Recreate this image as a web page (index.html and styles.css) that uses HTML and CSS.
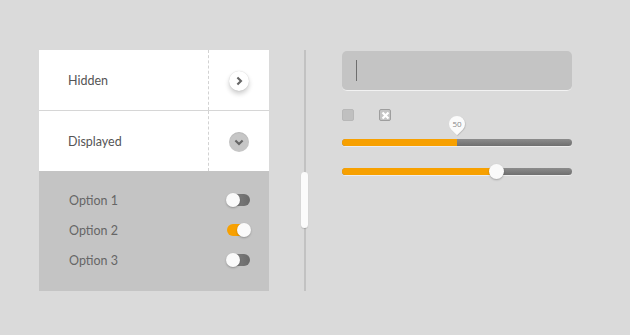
FILE: index.html
```html
<!DOCTYPE html>
<html lang="en">
<head>
    <meta charset="UTF-8">
    <title>UI Kit</title>
    <link rel="stylesheet" href="styles.css">
</head>
<body>
    <div class="kit">
        <div class="accordion">
            <div class="acc-row">
                <span class="acc-label">Hidden</span>
                <div class="acc-side">
                    <span class="round-btn">
                        <svg width="10" height="10" viewBox="0 0 10 10"><path d="M3.4 1.4 L7 5 L3.4 8.6" fill="none" stroke="#666" stroke-width="2.1"/></svg>
                    </span>
                </div>
            </div>
            <div class="acc-row">
                <span class="acc-label">Displayed</span>
                <div class="acc-side">
                    <span class="round-btn open">
                        <svg width="10" height="10" viewBox="0 0 10 10"><path d="M1.4 3.4 L5 7 L8.6 3.4" fill="none" stroke="#666" stroke-width="2.1"/></svg>
                    </span>
                </div>
            </div>
            <div class="options">
                <div class="option">
                    <span>Option 1</span>
                    <span class="toggle"></span>
                </div>
                <div class="option">
                    <span>Option 2</span>
                    <span class="toggle on"></span>
                </div>
                <div class="option">
                    <span>Option 3</span>
                    <span class="toggle"></span>
                </div>
            </div>
        </div>

        <div class="vtrack">
            <span class="vthumb"></span>
        </div>

        <div class="controls">
            <div class="textbox"><span class="caret"></span></div>
            <div class="checks">
                <span class="check"></span>
                <span class="check crossed">
                    <svg width="9" height="9" viewBox="0 0 9 9"><path d="M1.5 1.5 L7.5 7.5 M7.5 1.5 L1.5 7.5" stroke="#fff" stroke-width="2.2"/></svg>
                </span>
            </div>
            <div class="slider">
                <div class="fill" style="width: 50%"></div>
                <span class="pin" style="left: 50%"><span class="pin-value">50</span></span>
            </div>
            <div class="slider">
                <div class="fill" style="width: 67.4%"></div>
                <span class="knob" style="left: 67.4%"></span>
            </div>
        </div>
    </div>
</body>
</html>
```

FILE: styles.css
```css
body {
    margin: 0;
    background-color: #dadada;
    font-family: Lato, "Noto Sans", sans-serif;
    color: #5a5a5a;
}

.kit {
    display: flex;
    align-items: flex-start;
    padding: 50px 0 0 39px;
}

/* Accordion */
.accordion {
    width: 230px;
    height: 241px;
    display: flex;
    flex-direction: column;
}

.acc-row {
    display: flex;
    height: 60px;
    background-color: #fff;
    border-bottom: 1px solid #d6d6d6;
}

.acc-row + .acc-row {
    border-bottom: none;
}

.acc-label {
    flex: 1;
    display: flex;
    align-items: center;
    padding-left: 29px;
    font-size: 12.5px;
    color: #555;
}

.acc-side {
    width: 60px;
    border-left: 1px dashed #d2d2d2;
    display: flex;
    align-items: center;
    justify-content: center;
}

.round-btn {
    width: 20px;
    height: 20px;
    border-radius: 50%;
    background-color: #fff;
    box-shadow: 0 3px 5px rgba(0, 0, 0, 0.2), 0 0 1px rgba(0, 0, 0, 0.2);
    display: flex;
    align-items: center;
    justify-content: center;
    margin-top: 1px;
}

.round-btn.open {
    background-color: #c6c6c6;
    box-shadow: inset 0 1px 1px rgba(0, 0, 0, 0.08);
}

.options {
    flex: 1;
    background-color: #c4c4c4;
    padding: 23px 19px 0 30px;
    display: flex;
    flex-direction: column;
    gap: 18px;
}

.option {
    display: flex;
    align-items: center;
    justify-content: space-between;
    height: 12px;
    font-size: 12.5px;
    color: #666;
}

.toggle {
    position: relative;
    width: 23px;
    height: 12px;
    border-radius: 6px;
    background: linear-gradient(to right, #8a8a8a, #6a6a6a);
}

.toggle::after {
    content: "";
    position: absolute;
    left: -1px;
    top: -1px;
    width: 14px;
    height: 14px;
    border-radius: 50%;
    background-color: #fafafa;
    box-shadow: 0 1px 2px rgba(0, 0, 0, 0.25);
}

.toggle.on {
    background: #f7a000;
}

.toggle.on::after {
    left: 10px;
}

/* Vertical scrollbar */
.vtrack {
    position: relative;
    width: 2px;
    height: 241px;
    margin-left: 35px;
    background-color: #c2c2c2;
}

.vthumb {
    position: absolute;
    left: -3px;
    top: 122px;
    width: 7px;
    height: 56px;
    border-radius: 4px;
    background-color: #fbfbfb;
    box-shadow: 0 1px 1px rgba(0, 0, 0, 0.15);
}

/* Right controls */
.controls {
    margin-left: 36px;
    width: 230px;
    display: flex;
    flex-direction: column;
}

.textbox {
    height: 39px;
    margin-top: 1px;
    border-radius: 5px;
    background-color: #c4c4c4;
    border-bottom: 1px solid #f2f2f2;
    display: flex;
    align-items: center;
    padding-left: 14px;
}

.caret {
    width: 1px;
    height: 21px;
    background-color: #6e6e6e;
}

.checks {
    display: flex;
    gap: 25px;
    margin-top: 18px;
}

.check {
    width: 12px;
    height: 12px;
    border-radius: 2px;
    background-color: #c0c0c0;
    border: 1px solid #b8b8b8;
    box-sizing: border-box;
    display: flex;
    align-items: center;
    justify-content: center;
}

.check.crossed {
    background-color: #c4c4c4;
    border-color: #9e9e9e;
}

.slider {
    position: relative;
    height: 7px;
    border-radius: 4px;
    background: linear-gradient(to bottom, #8c8c8c, #6f6f6f);
    box-shadow: 0 1px 0 rgba(255, 255, 255, 0.5);
    margin-top: 18px;
}

.slider + .slider {
    margin-top: 22px;
}

.fill {
    height: 100%;
    border-radius: 4px 0 0 4px;
    background-color: #f7a000;
}

.pin {
    position: absolute;
    top: -23px;
    width: 18px;
    height: 18px;
    margin-left: -9px;
}

.pin::before {
    content: "";
    position: absolute;
    left: 1px;
    top: 0;
    width: 16px;
    height: 16px;
    border-radius: 50% 50% 50% 0;
    transform: rotate(-45deg);
    background-color: #fbfbfb;
    box-shadow: 0 1px 1px rgba(0, 0, 0, 0.15);
}

.pin-value {
    position: relative;
    display: block;
    width: 18px;
    line-height: 16px;
    text-align: center;
    font-size: 8px;
    font-family: "Open Sans", sans-serif;
    color: #888;
}

.knob {
    position: absolute;
    top: -4px;
    width: 15px;
    height: 15px;
    margin-left: -8px;
    border-radius: 50%;
    background-color: #fafafa;
    box-shadow: 0 1px 2px rgba(0, 0, 0, 0.25);
}
```
